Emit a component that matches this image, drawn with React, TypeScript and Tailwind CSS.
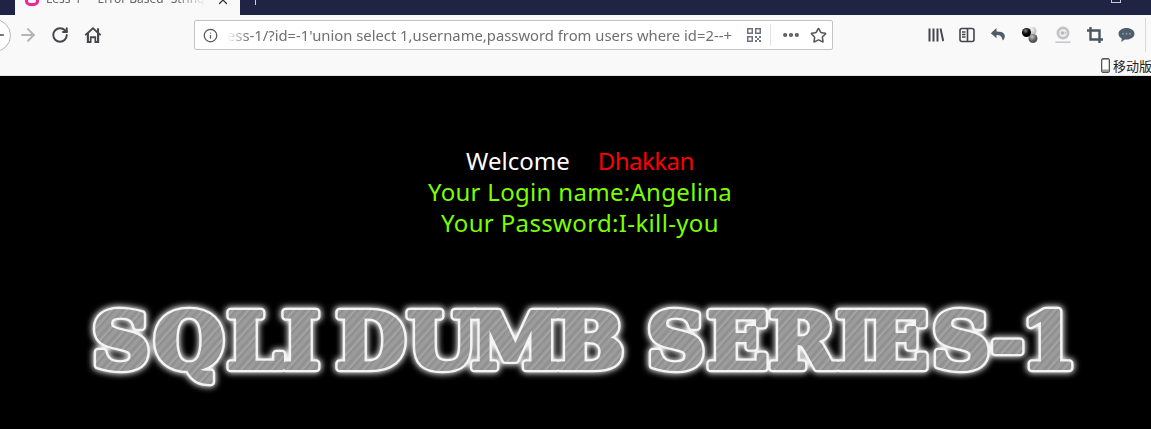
import { ArrowRight, ArrowLeft, RotateCw, Info, MoreHorizontal, Star, X } from 'lucide-react'

const QrIcon = () => (
  <svg width="16" height="16" viewBox="0 0 16 16" fill="#6b7280">
    <path d="M1 1h6v6H1zM2.500 2.500v3h3v-3zM9 1h6v6H9zM10.500 2.500v3h3v-3zM1 9h6v6H1zM2.500 10.500v3h3v-3z" fillRule="evenodd" />
    <path d="M9 9h2v2H9zM13 9h2v2h-2zM11 11h2v2h-2zM9 13h2v2H9zM13 13h2v2h-2z" />
  </svg>
)

const HomeIcon = () => (
  <svg width="18" height="18" viewBox="0 0 16 16" fill="#45454d">
    <path fillRule="evenodd" d="M8 .8.6 7.600l1 1.100.9-.8V15h4.200v-4.200h2.600V15h4.200V7.900l.9.8 1-1.100-2-1.800V2h-1.800v2.200zM8 3.200l3.600 3.300v6.800h-.8V9H5.200v4.300h-.8V6.500z" />
  </svg>
)

const LibraryIcon = () => (
  <svg width="16" height="16" viewBox="0 0 16 16" fill="#45454d">
    <path d="M.5 1.500h2v13h-2zM4.500 1.500h2v13h-2zM8.500 1.500h2v13h-2zM11.600 1.800l1.800-.6 2.800 12.600-1.900.6z" />
  </svg>
)

const SidebarIcon = () => (
  <svg width="16" height="16" viewBox="0 0 16 16" fill="none" stroke="#45454d">
    <rect x="1" y="1.500" width="14" height="13" rx="2" strokeWidth="1.600" />
    <path d="M8.500 1.500v13" strokeWidth="1.600" />
    <path d="M3 5h3.500M3 7.500h3.500M3 10h3.500" strokeWidth="1.300" />
  </svg>
)

const UndoIcon = () => (
  <svg width="16" height="16" viewBox="0 0 16 16" fill="#4f5b66">
    <path d="M6.500 1 .8 6.200l5.700 5V8.100c3.400 0 5.300.9 6.200 5.400 2-1.700 2.700-4.300 1.600-6.300C13.300 5.200 10.500 4.500 6.500 4.500z" />
  </svg>
)

const BallsIcon = () => (
  <svg width="18" height="18" viewBox="0 0 18 18">
    <defs>
      <radialGradient id="lightBall" cx="40%" cy="30%">
        <stop offset="0%" stopColor="#f5f5f5" />
        <stop offset="100%" stopColor="#c4c4c4" />
      </radialGradient>
      <radialGradient id="greyBall" cx="40%" cy="30%">
        <stop offset="0%" stopColor="#c2c2c2" />
        <stop offset="100%" stopColor="#555" />
      </radialGradient>
      <radialGradient id="darkBall" cx="40%" cy="30%">
        <stop offset="0%" stopColor="#888" />
        <stop offset="60%" stopColor="#1c1c1c" />
        <stop offset="100%" stopColor="#000" />
      </radialGradient>
    </defs>
    <circle cx="11.500" cy="5" r="4" fill="url(#lightBall)" />
    <circle cx="12" cy="12.500" r="4.500" fill="url(#greyBall)" />
    <circle cx="5.500" cy="6.500" r="4.500" fill="url(#darkBall)" />
  </svg>
)

const CamIcon = () => (
  <svg width="18" height="18" viewBox="0 0 18 18">
    <circle cx="9" cy="7" r="6.500" fill="#c2c2c4" />
    <circle cx="9" cy="7" r="3.800" fill="#f0f0f1" />
    <rect x="6.800" y="5.500" width="3.400" height="3" fill="#b8b8ba" />
    <path d="m10.200 7 1.600-1.200v2.400z" fill="#b8b8ba" />
    <rect x="1.500" y="15.500" width="15" height="1.400" fill="#c2c2c4" />
  </svg>
)

const CropIcon = () => (
  <svg width="16" height="16" viewBox="0 0 16 16" fill="none" stroke="#4a5561" strokeWidth="2.400">
    <path d="M3.500 0v12.500H16M0 3.500h12.500V16" />
  </svg>
)

const ChatIcon = () => (
  <svg width="17" height="16" viewBox="0 0 17 16">
    <path d="M8.500 1C4 1 .5 3.500.5 6.800c0 2 1.300 3.700 3.300 4.800L3.300 15l3.500-2.500c.6.100 1.100.1 1.700.1 4.500 0 8-2.600 8-5.800S13 1 8.500 1z" fill="#4e5d6c" />
    <circle cx="5" cy="6.800" r="1" fill="#8b98a5" />
    <circle cx="8.500" cy="6.800" r="1" fill="#8b98a5" />
    <circle cx="12" cy="6.800" r="1" fill="#8b98a5" />
  </svg>
)

const PhoneIcon = () => (
  <svg width="9" height="15" viewBox="0 0 9 15" className="shrink-0">
    <rect x="0.500" y="0.500" width="8" height="14" rx="1.500" fill="#9a9a9c" stroke="#555" />
    <rect x="1.500" y="2" width="6" height="9.500" fill="#fff" />
  </svg>
)

// left edge of each letter in the banner, measured off the screenshot (space included)
const bannerX = [93, 155, 228, 283, 0, 337, 408, 472, 557, 0, 648, 708, 770, 837, 868, 933, 992, 1022]
const scaleX = 1.06
const bannerXs = bannerX.map((x) => ((x - 1) / scaleX).toFixed(1)).join(' ')

// the banner is a picture in the original, so it's drawn, with the letters kept as <text>
const Banner = () => (
  <svg width="1151" height="100" viewBox="0 0 1151 100" className="block shrink-0">
    <defs>
      <pattern id="brushed" width="11" height="11" patternUnits="userSpaceOnUse" patternTransform="rotate(-50)">
        <rect width="11" height="11" fill="#989898" />
        <rect y="0" width="11" height="1" fill="#aaaaaa" />
        <rect y="2" width="11" height="1" fill="#8a8a8a" />
        <rect y="5" width="11" height="1" fill="#a2a2a2" />
        <rect y="8" width="11" height="1" fill="#888888" />
      </pattern>
      <filter id="glow" x="-5%" y="-30%" width="110%" height="160%">
        <feGaussianBlur stdDeviation="3" />
      </filter>
    </defs>
    <g transform={`scale(${scaleX} 1)`} fontFamily="'DejaVu Serif', serif" fontWeight="900" fontSize="76">
      <text x={bannerXs} y="70" fill="#fff" stroke="#fff" strokeWidth="10" strokeLinejoin="round" filter="url(#glow)">SQLI DUMB SERIES-1</text>
      <text x={bannerXs} y="70" fill="#f4f4f4" stroke="#f4f4f4" strokeWidth="8.500" strokeLinejoin="round">SQLI DUMB SERIES-1</text>
      <text x={bannerXs} y="70" fill="url(#brushed)" stroke="url(#brushed)" strokeWidth="4" strokeLinejoin="round">SQLI DUMB SERIES-1</text>
    </g>
  </svg>
)

export default function App() {
  return (
    <div className="w-[1151px] h-[429px] overflow-hidden bg-black flex flex-col font-['Noto_Sans',sans-serif]">
      {/* tab strip, cut off at the top of the shot */}
      <div className="h-[15px] shrink-0 bg-[#1f2344] flex items-end relative">
        <div className="ml-[15px] w-[225px] h-[15px] bg-[#f9f9fa] flex items-center overflow-hidden relative">
          <div className="ml-[10px] w-[14px] h-[14px] rounded-[5px] border-[3px] border-[#f0239b] -mt-[17px] shrink-0" />
          <span className="ml-[7px] text-[12px] leading-none whitespace-nowrap text-[#666] -mt-[18px] [mask-image:linear-gradient(to_right,black_130px,transparent_160px)]">Less-1 **Error Based- String</span>
          <X size={14} strokeWidth={2.2} className="absolute left-[201px] -top-[7px] text-[#333]" />
        </div>
        <div className="ml-[15px] w-px h-[5px] self-start bg-[#cfd0d8]" />
        <div className="absolute left-[1111px] top-0 w-[10px] h-[3px] border border-t-0 border-[#c9cad4]" />
      </div>

      <div className="h-[61px] shrink-0 bg-[#f9f9fa] border-b border-[#e3e3e5] flex flex-col">
        <div className="h-[40px] flex items-center">
          <div className="-ml-[22px] w-[33px] h-[33px] rounded-full border border-[#b5b5b7] bg-white flex items-center justify-center shrink-0">
            <ArrowLeft size={18} className="text-[#45454d] ml-[6px]" />
          </div>
          <ArrowRight size={20} strokeWidth={2.4} className="ml-[7px] text-[#b4b4b6] shrink-0" />
          <RotateCw size={18} strokeWidth={2.6} className="ml-[13px] text-[#45454d] shrink-0" />
          <div className="ml-[15px] shrink-0"><HomeIcon /></div>

          <div className="ml-[92px] w-[639px] h-[30px] shrink-0 bg-white border border-[#c4c4c6] rounded-[2px] flex items-center">
            <Info size={15} className="ml-[8px] text-[#55555b] shrink-0" />
            <span className="ml-[9px] text-[14.800px] text-[#6f6f74] whitespace-nowrap [mask-image:linear-gradient(to_right,transparent_0px,black_22px)]">ess-1/?id=-1'union select 1,username,password from users where id=2--+</span>
            <div className="ml-auto flex items-center shrink-0">
              <QrIcon />
              <div className="ml-[8px] w-px h-[22px] bg-[#e3e3e5]" />
              <MoreHorizontal size={20} strokeWidth={3} className="ml-[10px] text-[#55555b]" />
              <Star size={17} strokeWidth={2.2} className="ml-[9px] mr-[5px] text-[#55555b]" />
            </div>
          </div>

          <div className="ml-[95px] flex items-center gap-[15px] shrink-0">
            <LibraryIcon />
            <SidebarIcon />
            <UndoIcon />
            <BallsIcon />
            <CamIcon />
            <CropIcon />
            <ChatIcon />
          </div>
          <div className="ml-[10px] w-px h-[34px] bg-[#d8d8da] shrink-0" />
        </div>
        <div className="flex-1 flex items-center pl-[1101px] gap-[3px] whitespace-nowrap overflow-hidden">
          <PhoneIcon />
          <span className="text-[13px] leading-none text-[#222] font-['Noto_Sans_CJK_SC',sans-serif]">移动版专区</span>
        </div>
      </div>

      <div className="flex-1 bg-black flex flex-col items-center pt-[69px]">
        <div className="pl-[9px] text-[24px] leading-[31px] text-center whitespace-pre">
          <div className="text-white">Welcome<span className="ml-[28px] text-[#ff0000] tracking-[-0.5px]">Dhakkan</span></div>
          <div className="text-[#78ff00] tracking-[0.3px]">Your Login name:Angelina</div>
          <div className="text-[#78ff00] tracking-[0.35px]">Your Password:I-kill-you</div>
        </div>
        <div className="mt-[60px]">
          <Banner />
        </div>
      </div>
    </div>
  )
}
